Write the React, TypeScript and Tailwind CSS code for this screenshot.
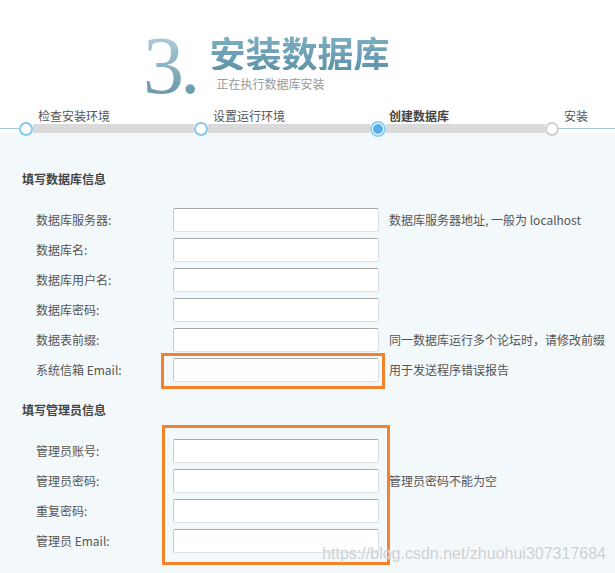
const steps = [
  { label: "检查安装环境", state: "done", width: "w-[175px]" },
  { label: "设置运行环境", state: "done", width: "w-[176px]" },
  { label: "创建数据库", state: "current", width: "w-[175px]" },
  { label: "安装", state: "todo", width: "flex-1" },
];

const dbFields = [
  { label: "数据库服务器:", hint: "数据库服务器地址, 一般为 localhost" },
  { label: "数据库名:" },
  { label: "数据库用户名:" },
  { label: "数据库密码:" },
  { label: "数据表前缀:", hint: "同一数据库运行多个论坛时，请修改前缀" },
  { label: "系统信箱 Email:", hint: "用于发送程序错误报告", mark: true },
];

const adminFields = [
  { label: "管理员账号:", mark: true },
  { label: "管理员密码:", hint: "管理员密码不能为空" },
  { label: "重复密码:" },
  { label: "管理员 Email:" },
];

function Circle({ state }: { state: string }) {
  if (state === "current") {
    return (
      <div className="relative z-10 flex h-[16px] w-[16px] shrink-0 items-center justify-center rounded-full border-[2px] border-[#8fcdf2] bg-white">
        <div className="h-[10px] w-[10px] rounded-full bg-[#55aee8]" />
      </div>
    );
  }
  return (
    <div
      className={
        state === "done"
          ? "relative z-10 h-[14px] w-[14px] shrink-0 rounded-full border-[2.5px] border-[#84c7f0] bg-white"
          : "relative z-10 h-[14px] w-[14px] shrink-0 rounded-full border-[2px] border-[#cfcfcf] bg-white"
      }
    />
  );
}

function Row({
  label,
  hint,
  mark,
  tall,
}: {
  label: string;
  hint?: string;
  mark?: boolean;
  tall?: boolean;
}) {
  return (
    <div className="flex h-[24px] items-center">
      <label className="w-[151px] pl-[14px]">{label}</label>
      <div className="relative">
        <input className="block h-[24px] w-[206px] rounded-[2px] border border-[#dcdfe3] border-t-[#a9a9a9] border-l-[#cacaca] bg-white outline-none" />
        {mark &&
          (tall ? (
            <div className="pointer-events-none absolute left-[-11px] top-[-14px] z-20 h-[140px] w-[228px] border-[3px] border-[#f5812b]" />
          ) : (
            <div className="pointer-events-none absolute left-[-12px] top-[-5px] z-20 h-[36px] w-[224px] border-[3px] border-[#f5812b]" />
          ))}
      </div>
      {hint && <span className="ml-[10px] whitespace-nowrap">{hint}</span>}
    </div>
  );
}

export default function App() {
  return (
    <div className="relative h-[573px] w-[615px] overflow-hidden bg-white font-['Noto_Sans_CJK_SC',sans-serif] text-[12px] text-[#555]">
      <header className="flex h-[108px] pl-[143px] pt-[25px]">
        <div className="bg-gradient-to-b from-[#bcd6e0] to-[#5a8da2] bg-clip-text font-['Liberation_Serif',serif] text-[82px] leading-none tracking-[-4px] text-transparent">
          3.
        </div>
        <div className="ml-[13px] pt-[9px]">
          <h1 className="bg-gradient-to-b from-[#7fb0c3] to-[#5f94a9] bg-clip-text text-[36px] font-bold leading-none text-transparent">
            安装数据库
          </h1>
          <p className="mt-[8px] pl-[7px] text-[12px] leading-none text-[#9a9a9a]">
            正在执行数据库安装
          </p>
        </div>
      </header>

      <div className="flex items-end">
        <div className="flex h-[9px] w-[19px] items-center">
          <div className="h-px w-full bg-[#a9cad7]" />
        </div>
        {steps.map((step, i) => (
          <div key={step.label} className={step.width}>
            <div
              className={
                step.state === "current"
                  ? "h-[16px] whitespace-nowrap pl-[19px] leading-[16px] font-bold text-[#444]"
                  : "h-[16px] whitespace-nowrap pl-[19px] leading-[16px] text-[#555]"
              }
            >
              {step.label}
            </div>
            <div className="flex h-[9px] items-center">
              <Circle state={step.state} />
              {i < steps.length - 1 ? (
                <div className="h-[9px] flex-1 bg-[#dadada]" />
              ) : (
                <div className="h-px flex-1 bg-[#a9cad7]" />
              )}
            </div>
          </div>
        ))}
      </div>

      <div className="h-[440px] bg-[#f3f8fb] pl-[22px] pt-[38px]">
        <h2 className="text-[12px] font-bold leading-[16px] text-[#444]">填写数据库信息</h2>
        <div className="mt-[21px] flex flex-col gap-[6px]">
          {dbFields.map((f) => (
            <Row key={f.label} label={f.label} hint={f.hint} mark={f.mark} />
          ))}
        </div>

        <h2 className="mt-[20px] text-[12px] font-bold leading-[16px] text-[#444]">填写管理员信息</h2>
        <div className="mt-[21px] flex flex-col gap-[6px]">
          {adminFields.map((f) => (
            <Row key={f.label} label={f.label} hint={f.hint} mark={f.mark} tall />
          ))}
        </div>
      </div>

      <div className="pointer-events-none absolute right-[9px] top-[546px] z-30 font-['Liberation_Sans',sans-serif] text-[16px] leading-none text-[#ccd0d4] [text-shadow:0_0_2px_#fff]">
        https://blog.csdn.net/zhuohui307317684
      </div>
    </div>
  );
}
